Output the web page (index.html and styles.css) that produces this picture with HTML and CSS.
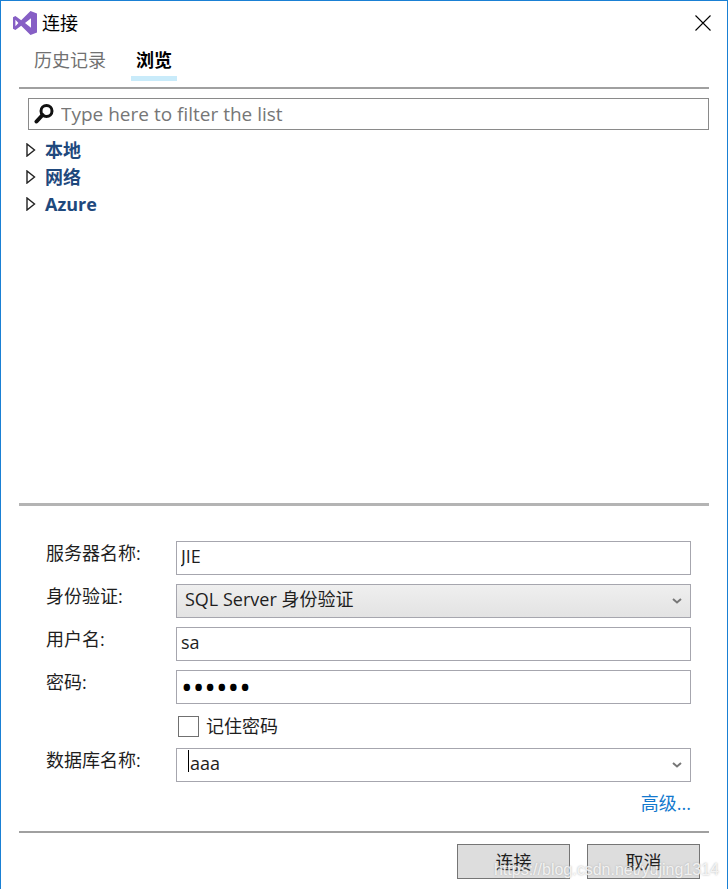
FILE: index.html
```html
<!DOCTYPE html>
<html lang="zh-CN">

<head>
  <meta charset="UTF-8">
  <meta name="viewport" content="width=device-width, initial-scale=1.0">
  <title>连接</title>
  <link rel="stylesheet" href="styles.css">
</head>

<body>
  <form id="connect" class="dialog">
    <header class="titlebar">
      <svg class="logo" viewBox="0 0 24 24" aria-hidden="true">
        <path fill="#865fc5" fill-rule="evenodd"
          d="M17.5 0 24 2.6v18.8L17.5 24 8.2 14.8 2.4 19 0 17.8V6.2L2.4 5l5.8 4.2zM18 7.2 12 12l6 4.8zM2.4 8.8v6.4L5.4 12z" />
      </svg>
      <h1 class="title">连接</h1>
      <button type="button" class="close" aria-label="关闭">
        <svg viewBox="0 0 16 16" aria-hidden="true">
          <path d="M.5.5l15 15M15.5.5l-15 15" fill="none" stroke="#000" stroke-width="1.1" />
        </svg>
      </button>
    </header>

    <nav class="tabs">
      <a href="#history" class="tab">历史记录</a>
      <a href="#browse" class="tab active">浏览</a>
    </nav>

    <section class="browse">
      <div class="filter">
        <svg viewBox="0 0 20 20" aria-hidden="true">
          <circle cx="12.5" cy="7" r="5.5" fill="none" stroke="#111" stroke-width="3" />
          <path d="M8.500 11 2.500 17.500" fill="none" stroke="#111" stroke-width="4" stroke-linecap="round" />
        </svg>
        <input type="text" placeholder="Type here to filter the list" aria-label="Type here to filter the list">
      </div>
      <ul class="tree">
        <li>
          <details>
            <summary><svg viewBox="0 0 10 14"><path d="M1 1v12l7.500-6z" /></svg>本地</summary>
          </details>
        </li>
        <li>
          <details>
            <summary><svg viewBox="0 0 10 14"><path d="M1 1v12l7.500-6z" /></svg>网络</summary>
          </details>
        </li>
        <li>
          <details>
            <summary><svg viewBox="0 0 10 14"><path d="M1 1v12l7.500-6z" /></svg>Azure</summary>
          </details>
        </li>
      </ul>
    </section>

    <section class="fields">
      <label for="server">服务器名称:</label>
      <input id="server" class="box" type="text" value="JIE">

      <label for="auth">身份验证:</label>
      <div class="combo">
        <select id="auth" class="box">
          <option>SQL Server 身份验证</option>
        </select>
        <svg class="arrow" viewBox="0 0 10 6" aria-hidden="true"><path d="M1 1l4 3.500L9 1" /></svg>
      </div>

      <label for="user">用户名:</label>
      <input id="user" class="box" type="text" value="sa" autocomplete="username">

      <label for="password">密码:</label>
      <input id="password" class="box" type="password" value="secret" autocomplete="current-password">

      <div class="remember">
        <input id="remember" type="checkbox">
        <label for="remember">记住密码</label>
      </div>

      <label for="database">数据库名称:</label>
      <div class="combo">
        <input id="database" class="box" type="text" value="aaa">
        <span class="caret"></span>
        <svg class="arrow" viewBox="0 0 10 6" aria-hidden="true"><path d="M1 1l4 3.500L9 1" /></svg>
      </div>

      <a href="#advanced" class="advanced">高级...</a>
    </section>

    <footer class="actions">
      <button type="submit">连接</button>
      <button type="button">取消</button>
    </footer>

    <span class="watermark">https://blog.csdn.net/yujing1314</span>
  </form>
</body>

</html>
```
FILE: styles.css
```css
* {
  box-sizing: border-box;
}

body {
  margin: 0;
  background-color: #fff;
}

body,
input,
select,
button {
  font-family: "Open Sans", "Noto Sans CJK SC", sans-serif;
  font-size: 18px;
  line-height: 24px;
  color: #1e1e1e;
}

.dialog {
  position: relative;
  display: flex;
  flex-direction: column;
  min-height: 100vh;
  padding: 0 18px;
  border: 1px solid #1a80d4;
  border-bottom: 0;
}

.titlebar {
  display: flex;
  align-items: center;
  height: 44px;
  margin: 0 -2px 0 -6px;
}

.logo {
  width: 24px;
  height: 24px;
}

.title {
  flex: 1;
  margin: 0 0 0 5px;
  font-size: 18px;
  font-weight: 400;
  color: #000;
}

.close {
  display: flex;
  padding: 0;
  border: 0;
  background: none;
}

.close svg {
  width: 16px;
  height: 16px;
}

.tabs {
  display: flex;
  gap: 20px;
  height: 44px;
  padding-left: 10px;
  border-bottom: 2px solid #a0a0a0;
}

.tab {
  height: 36px;
  padding: 3px 5px 0;
  color: #717171;
  text-decoration: none;
}

.tab.active {
  border-bottom: 5px solid #c9ebfa;
  font-weight: 700;
  color: #000;
}

.browse {
  flex: 1;
  padding: 9px 0 0 9px;
}

.filter {
  display: flex;
  align-items: center;
  height: 32px;
  padding-left: 5px;
  border: 1px solid #8a8a8a;
}

.filter svg {
  width: 20px;
  height: 20px;
}

.filter input {
  flex: 1;
  min-width: 0;
  padding: 0 7px;
  border: 0;
  outline: 0;
  font-size: 19px;
}

.filter input::placeholder {
  color: #767676;
  opacity: 1;
}

.tree {
  margin: 6px 0 0;
  padding: 0;
  list-style: none;
}

.tree summary {
  display: flex;
  align-items: center;
  gap: 9px;
  height: 27px;
  margin-left: -2px;
  font-weight: 700;
  color: #1f497d;
}

.tree svg {
  width: 10px;
  height: 14px;
  fill: none;
  stroke: #222;
  stroke-width: 1.4;
}

.fields {
  display: grid;
  grid-template-columns: 130px 1fr;
  gap: 9px 0;
  padding: 35px 18px 16px 27px;
  border-top: 3px solid #b4b4b4;
}

.box {
  width: 100%;
  height: 34px;
  padding: 0 4px 5px;
  border: 1px solid #a6a6ae;
  border-radius: 0;
  background-color: #fff;
  outline: 0;
}

.box[type="password"] {
  padding-bottom: 0;
  font-size: 31px;
  color: #000;
}

.combo {
  position: relative;
}

.combo .box {
  display: block;
  padding-left: 13px;
}

select.box {
  appearance: none;
  background-image: linear-gradient(#efefef, #e3e3e3);
}

.combo select.box {
  padding-left: 8px;
}

.arrow {
  position: absolute;
  top: 14px;
  right: 9px;
  width: 10px;
  height: 6px;
  fill: none;
  stroke: #777;
  stroke-width: 2;
  pointer-events: none;
}

/* insertion point of the database box */
.caret {
  position: absolute;
  top: 2px;
  left: 12px;
  width: 1px;
  height: 22px;
  background-color: #000;
}

.remember {
  grid-column: 2;
  display: flex;
  align-items: center;
  gap: 7px;
  height: 26px;
}

.remember input {
  appearance: none;
  width: 21px;
  height: 21px;
  margin: 0 0 0 2px;
  border: 1px solid #707070;
  background-color: #fff;
}

.advanced {
  grid-column: 2;
  justify-self: end;
  color: #1379ce;
  text-decoration: none;
}

.actions {
  display: flex;
  justify-content: flex-end;
  gap: 17px;
  padding: 11px 9px 10px;
  border-top: 2px solid #a0a0a0;
}

.actions button {
  width: 113px;
  height: 35px;
  padding: 0;
  border: 1px solid #757575;
  background-color: #ddd;
}

.watermark {
  position: absolute;
  right: 8px;
  bottom: 7px;
  font-family: "Liberation Sans", sans-serif;
  font-size: 16px;
  color: rgba(255, 255, 255, 0.8);
  text-shadow: 0 0 2px #aaa;
  pointer-events: none;
}
```
